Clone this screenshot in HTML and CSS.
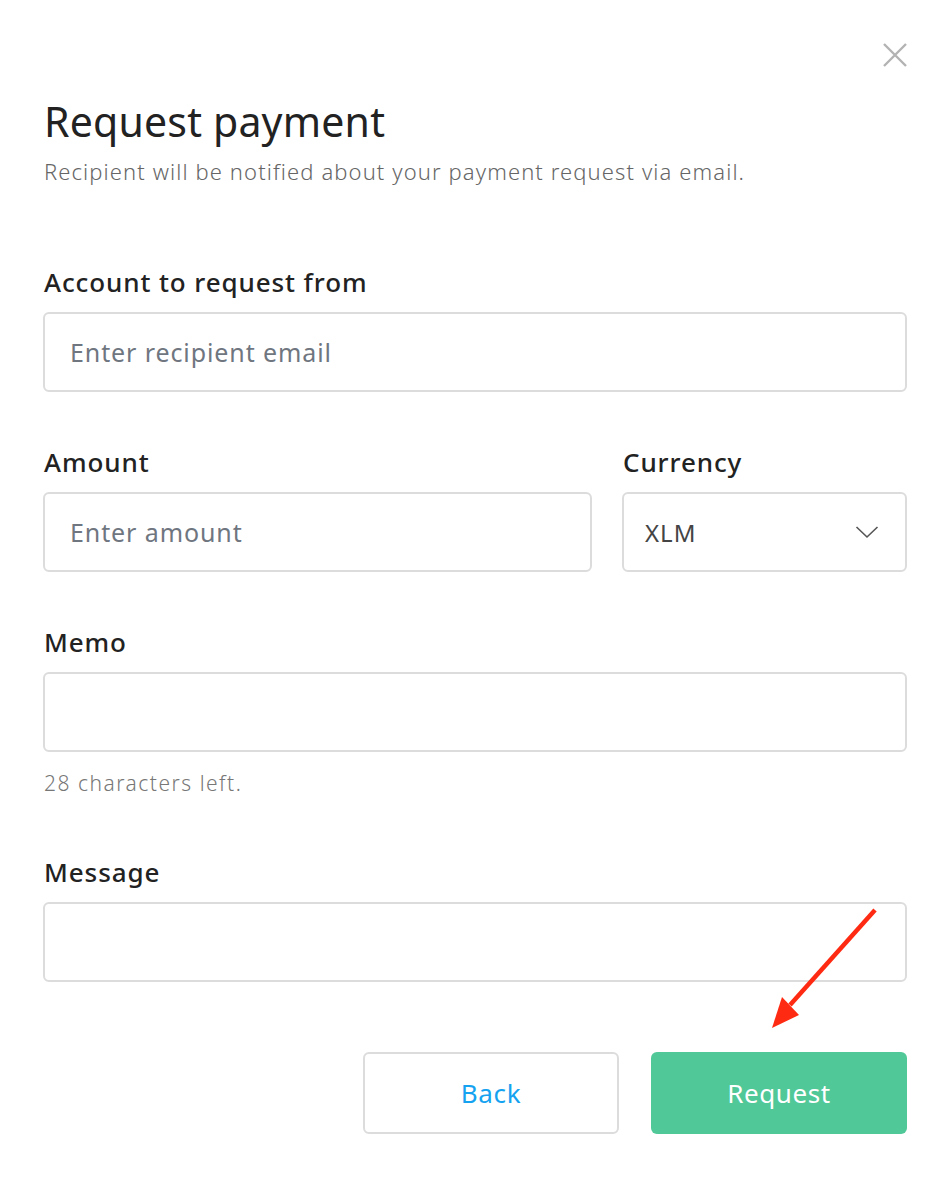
FILE: index.html
```html
<!DOCTYPE html>
<html>
<head>
<meta charset="utf-8">
<link rel="stylesheet" href="styles.css">
</head>
<body>
<div class="modal">
  <button class="close" aria-label="Close">
    <svg width="26" height="26" viewBox="0 0 26 26"><path d="M2 2 L24 24 M24 2 L2 24" stroke="#b3b3b3" stroke-width="2.4" fill="none"/></svg>
  </button>
  <h1 class="title">Request payment</h1>
  <p class="subtitle">Recipient will be notified about your payment request via email.</p>

  <div class="field first">
    <label class="label">Account to request from</label>
    <div class="input"><span class="placeholder">Enter recipient email</span></div>
  </div>

  <div class="row">
    <div class="field grow">
      <label class="label">Amount</label>
      <div class="input"><span class="placeholder">Enter amount</span></div>
    </div>
    <div class="field currency">
      <label class="label">Currency</label>
      <div class="input select"><span class="value">XLM</span>
        <svg width="24" height="14" viewBox="0 0 24 14"><path d="M1.5 2 L12 12 L22.5 2" stroke="#555" stroke-width="1.6" fill="none"/></svg>
      </div>
    </div>
  </div>

  <div class="field">
    <label class="label">Memo</label>
    <div class="input"></div>
    <p class="hint">28 characters left.</p>
  </div>

  <div class="field message">
    <label class="label">Message</label>
    <div class="input"></div>
  </div>

  <div class="actions">
    <button class="btn back">Back</button>
    <button class="btn primary">Request</button>
  </div>

  <svg class="arrow" width="120" height="130" viewBox="0 0 120 130">
    <line x1="113" y1="5" x2="28" y2="100" stroke="#ff2a12" stroke-width="4.5" stroke-linecap="butt"/>
    <polygon points="10,123 20,92 37,110" fill="#ff2a12"/>
  </svg>
</div>
</body>
</html>
```
FILE: styles.css
```css
html, body {
  margin: 0;
  padding: 0;
  background: #fff;
}
body {
  font-family: "Noto Sans", "Open Sans", sans-serif;
  color: #222;
}
.modal {
  position: relative;
  width: 864px;
  padding: 96px 41px 0 43px;
}
.close {
  position: absolute;
  top: 42px;
  right: 40px;
  border: 0;
  background: none;
  padding: 0;
  width: 26px;
  height: 26px;
}
.title {
  margin: 0;
  font-size: 41px;
  font-weight: 400;
  line-height: 50px;
  color: #222;
  padding-left: 1px;
  letter-spacing: 0.2px;
}
.subtitle {
  margin: 10px 0 0 1px;
  font-size: 22px;
  font-weight: 300;
  line-height: 30px;
  color: #666;
  letter-spacing: 1.1px;
}
.field {
  display: flex;
  flex-direction: column;
}
.field.first {
  margin-top: 81px;
}
.label {
  font-size: 26px;
  font-weight: 500;
  line-height: 30px;
  color: #222;
  padding-left: 1px;
  margin-bottom: 15px;
  letter-spacing: 0.9px;
}
.input {
  box-sizing: border-box;
  height: 80px;
  border: 2px solid #dcdcdc;
  border-radius: 6px;
  display: flex;
  align-items: center;
  padding: 0 25px;
}
.placeholder {
  font-size: 25px;
  color: #6f7680;
  letter-spacing: 0.9px;
}
.row {
  display: flex;
  gap: 30px;
  margin-top: 55px;
}
.grow {
  flex: 1;
}
.currency {
  width: 285px;
}
.select {
  justify-content: space-between;
  padding: 0 26px 0 21px;
}
.value {
  font-size: 24px;
  color: #444;
  letter-spacing: 1px;
}
.row + .field {
  margin-top: 55px;
}
.hint {
  margin: 17px 0 0 1px;
  font-size: 21px;
  font-weight: 300;
  line-height: 28px;
  color: #777;
  letter-spacing: 1.5px;
}
.field.message {
  margin-top: 60px;
}
.actions {
  display: flex;
  justify-content: flex-end;
  gap: 32px;
  margin-top: 70px;
}
.btn {
  box-sizing: border-box;
  width: 256px;
  height: 82px;
  border-radius: 6px;
  font-family: "Noto Sans", "Open Sans", sans-serif;
  font-size: 26px;
  font-weight: 400;
  letter-spacing: 0.6px;
}
.back {
  background: #fff;
  border: 2px solid #dcdcdc;
  color: #15a2f0;
}
.primary {
  background: #50c898;
  border: 0;
  color: #fff;
}
.arrow {
  position: absolute;
  left: 762px;
  top: 905px;
}
```
